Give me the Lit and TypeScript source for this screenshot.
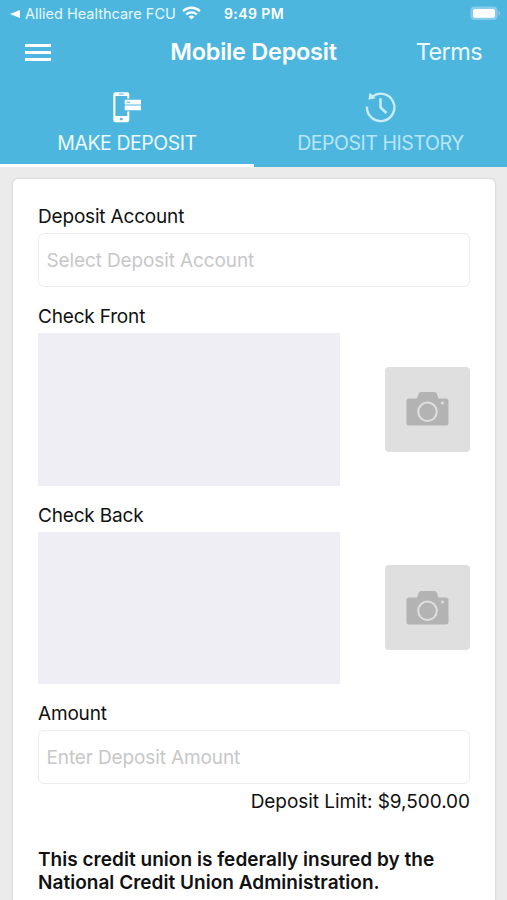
import { LitElement, html, svg, css } from "lit";
import { customElement, property } from "lit/decorators.js";

const wifiIcon = html`<svg class="wifi" width="19" height="14" viewBox="0 0 19 14">
  <g fill="none" stroke="#fff" stroke-width="2.3">
    <path d="M1.1 5.2a12 12 0 0 1 16.8 0" />
    <path d="M4.2 8.5a7.6 7.6 0 0 1 10.6 0" />
  </g>
  <path d="M9.5 13.6L6.6 10.8a4.2 4.2 0 0 1 5.8 0z" fill="#fff" />
</svg>`;

const batteryIcon = html`<svg class="battery" width="31" height="15" viewBox="0 0 31 15">
  <rect x=".5" y=".5" width="27" height="13.5" rx="4" fill="#fff" fill-opacity=".32" />
  <rect x="3" y="3" width="22" height="8.8" rx="2" fill="#fff" />
  <path d="M28.6 5v4.6c1-.4 1.6-1.2 1.6-2.3S29.6 5.4 28.6 5z" fill="#fff" fill-opacity=".4" />
</svg>`;

const depositIcon = html`<svg width="30" height="32" viewBox="0 0 30 32">
  <path fill="#fff" fill-rule="evenodd" d="M3.300 1.300h12a2 2 0 0 1 2 2v4.300h-2V5H3.400v20h11.900v-4.400h2v8.700a2 2 0 0 1-2 2h-12a2 2 0 0 1-2-2v-26a2 2 0 0 1 2-2zM7 2.600v1h4.600v-1zM9.300 26.700a1.400 1.400 0 1 0 0 2.800 1.400 1.400 0 0 0 0-2.800z" />
  <path fill="#fff" fill-rule="evenodd" d="M12.700 8.700h16.300v10.600H12.700zM12.700 13.400v1h16.300v-1zM14.300 10.800v.9h4v-.9z" />
</svg>`;

const historyIcon = html`<svg width="32" height="32" viewBox="0 0 32 32">
  <path d="M2 15.600A13.700 13.700 0 1 0 7.500 5.400" fill="none" stroke="#c9ecf8" stroke-width="2.400" />
  <path d="M4.600 1.500L3.400 8.800l7.300-1.500z" fill="#c9ecf8" />
  <path d="M15.500 7.300v9.100l5.900 5.600" fill="none" stroke="#c9ecf8" stroke-width="2.500" />
</svg>`;

@customElement("photo-row")
class PhotoRow extends LitElement {
  @property() label = "";

  static styles = css`
    :host { display: block; }
    .label { line-height: 26px; margin-bottom: 3px; }
    .row { display: flex; justify-content: space-between; align-items: center; }
    .preview { width: 302px; height: 152.5px; background: #efeef4; }
    .shoot {
      width: 85px; height: 85px; border: 0; padding: 0; border-radius: 4px;
      background: #dfdfdf; display: flex; align-items: center; justify-content: center;
    }
    svg { display: block; }
  `;

  render() {
    return html`
      <div class="label">${this.label}</div>
      <div class="row">
        <div class="preview"></div>
        <button class="shoot" aria-label=${this.label}>
          <svg width="43" height="34" viewBox="0 0 43 34">
            ${svg`<path fill="#b3b3b3" d="M3 6.5h8l1.600-4.800Q13.200 0 15 0h13.500q1.800 0 2.400 1.700l1.600 4.800h7.500a2.500 2.500 0 0 1 2.500 2.500v22a2.500 2.500 0 0 1-2.500 2.500H3A2.500 2.500 0 0 1 .5 31V9A2.500 2.500 0 0 1 3 6.500z" />
            <circle cx="21.500" cy="19.800" r="9.300" fill="none" stroke="#dfdfdf" stroke-width="2" />
            <circle cx="36.500" cy="11" r="1.500" fill="#dfdfdf" />`}
          </svg>
        </button>
      </div>
    `;
  }
}

@customElement("app-root")
class AppRoot extends LitElement {
  static styles = css`
    :host {
      display: flex; flex-direction: column; height: 900px; overflow: hidden;
      background: #ebebeb; color: #111; letter-spacing: -0.180px;
      font: 400 19px/24px Inter, "Liberation Sans", sans-serif;
    }
    svg { display: block; }
    header { background: #4cb6df; color: #fff; height: 167px; flex: none; }
    .status {
      height: 28px; display: grid; grid-template-columns: 224px 1fr auto;
      align-items: center; padding-right: 6px; font-size: 14.5px; line-height: 28px;
    }
    .back { display: flex; align-items: center; padding-left: 10px; color: #e6f6fc; }
    .caret { width: 0; height: 0; border: 4px solid transparent; border-left: 0; border-right: 10px solid #fff; margin-right: 5px; }
    .carrier { width: 151px; white-space: nowrap; letter-spacing: 0; }
    .wifi { margin-left: 6px; margin-top: -2px; }
    .battery { margin-top: -1px; }
    .time { font-weight: 600; font-size: 14px; letter-spacing: 0.4px; }
    .bar {
      height: 48px; display: grid; grid-template-columns: 1fr auto 1fr; align-items: center;
      padding: 0 25px;
    }
    .menu { display: flex; flex-direction: column; gap: 4px; width: 26px; }
    .menu i { height: 3px; background: #fff; }
    h1 { margin: 0; font-size: 23.5px; font-weight: 600; letter-spacing: -0.25px; }
    .terms { justify-self: end; font-size: 23.5px; color: #ecf9fe; letter-spacing: -0.6px; }
    .tabs { height: 91px; display: grid; grid-template-columns: 254px 253px; }
    .tab {
      display: flex; flex-direction: column; align-items: center; box-sizing: border-box;
      padding-top: 15px; gap: 8px; border-bottom: 3px solid transparent;
      font-size: 19.5px; line-height: 24px; color: #b9e6f6; letter-spacing: -0.45px;
    }
    .tab.on { color: #ecf9fe; border-color: #fff; }
    main {
      flex: none; margin: 12px 12px 0 13px; padding: 25px 25px 0; height: 730px; box-sizing: border-box;
      background: #fff; border-radius: 5px; box-shadow: 0 0 2px rgba(0, 0, 0, .22);
      display: flex; flex-direction: column; gap: 17px;
    }
    .label { line-height: 26px; margin-bottom: 3px; }
    .input {
      height: 54px; box-sizing: border-box; border: 1px solid #ececec; border-radius: 6px;
      padding: 0 7.5px; line-height: 53px; color: #c7c7c9; letter-spacing: -0.12px;
    }
    .limit { text-align: right; line-height: 24px; margin-top: 6px; letter-spacing: -0.04px; }
    .notice { margin: 17px 0 0; font-weight: 600; line-height: 23px; white-space: nowrap; letter-spacing: 0.03px; }
  `;

  render() {
    return html`
      <header>
        <div class="status">
          <div class="back"><i class="caret"></i><span class="carrier">Allied Healthcare FCU</span>${wifiIcon}</div>
          <div class="time">9:49 PM</div>
          ${batteryIcon}
        </div>
        <div class="bar">
          <div class="menu"><i></i><i></i><i></i></div>
          <h1>Mobile Deposit</h1>
          <div class="terms">Terms</div>
        </div>
        <div class="tabs">
          <div class="tab on">${depositIcon}<span>MAKE DEPOSIT</span></div>
          <div class="tab">${historyIcon}<span>DEPOSIT HISTORY</span></div>
        </div>
      </header>
      <main>
        <div>
          <div class="label">Deposit Account</div>
          <div class="input">Select Deposit Account</div>
        </div>
        <photo-row label="Check Front"></photo-row>
        <photo-row label="Check Back"></photo-row>
        <div>
          <div class="label">Amount</div>
          <div class="input">Enter Deposit Amount</div>
          <div class="limit">Deposit Limit: $9,500.00</div>
        </div>
        <p class="notice">This credit union is federally insured by the<br />National Credit Union Administration.</p>
      </main>
    `;
  }
}
